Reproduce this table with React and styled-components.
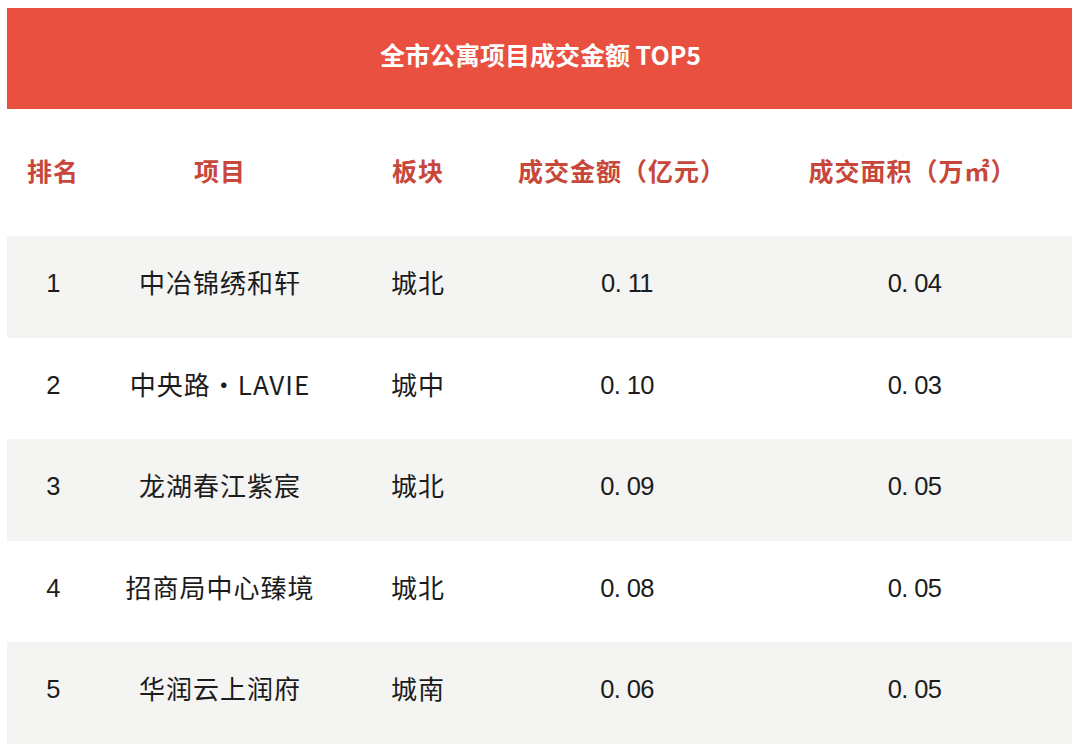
import React from 'react'
import styled, { createGlobalStyle } from 'styled-components'

const GlobalStyle = createGlobalStyle`
    body {
        margin: 0;
        background: #ffffff;
        font-family: "Noto Sans CJK SC", "Noto Sans", sans-serif;
    }
`

const COLUMNS = '92px 242px 150px 262px 1fr'

const Page = styled.div`
    padding: 8px 8px 10px 7px;
`

const Title = styled.div`
    height: 101px;
    box-sizing: border-box;
    background: #e9503f;
    color: #ffffff;
    font-size: 25px;
    font-weight: 700;
    display: flex;
    align-items: center;
    justify-content: center;
    padding: 0 0 10px 2px;
`

const HeadRow = styled.div`
    display: grid;
    grid-template-columns: ${COLUMNS};
    height: 127px;
    box-sizing: border-box;
    align-items: center;
    padding-bottom: 6px;
`

const HeadCell = styled.div`
    text-align: center;
    color: #c7473b;
    font-size: 25px;
    font-weight: 700;
    letter-spacing: 1px;
    padding-left: ${props => props.shift || 0}px;
`

const Row = styled.div`
    display: grid;
    grid-template-columns: ${COLUMNS};
    height: 101.5px;
    box-sizing: border-box;
    align-items: center;
    padding-bottom: 10px;
    background: ${props => props.striped ? '#f4f4f3' : '#ffffff'};
`

const Cell = styled.div`
    text-align: center;
    color: #1c1c1c;
    font-size: ${props => props.num ? 25.5 : 26}px;
    font-family: ${props => props.num
        ? '"Liberation Sans", "Noto Sans CJK SC", sans-serif'
        : '"Noto Sans CJK SC", sans-serif'};
    letter-spacing: ${props => props.num ? '-0.6px' : '1px'};
    padding-left: ${props => props.shift || 0}px;
    padding-top: ${props => props.num ? 4 : 0}px;
`

const rows = [
    ['1', '中冶锦绣和轩', '城北', '0. 11', '0. 04'],
    ['2', '中央路・LAVIE', '城中', '0. 10', '0. 03'],
    ['3', '龙湖春江紫宸', '城北', '0. 09', '0. 05'],
    ['4', '招商局中心臻境', '城北', '0. 08', '0. 05'],
    ['5', '华润云上润府', '城南', '0. 06', '0. 05'],
]

export default function App() {
    return (
        <Page>
            <GlobalStyle />
            <Title>全市公寓项目成交金额 TOP5</Title>
            <HeadRow>
                <HeadCell>排名</HeadCell>
                <HeadCell>项目</HeadCell>
                <HeadCell shift={4}>板块</HeadCell>
                <HeadCell>成交金额（亿元）</HeadCell>
                <HeadCell>成交面积（万㎡）</HeadCell>
            </HeadRow>
            {rows.map((r, i) => (
                <Row key={r[0]} striped={i % 2 === 0}>
                    <Cell num>{r[0]}</Cell>
                    <Cell>{r[1]}</Cell>
                    <Cell shift={4}>{r[2]}</Cell>
                    <Cell num shift={10}>{r[3]}</Cell>
                    <Cell num shift={4}>{r[4]}</Cell>
                </Row>
            ))}
        </Page>
    )
}
